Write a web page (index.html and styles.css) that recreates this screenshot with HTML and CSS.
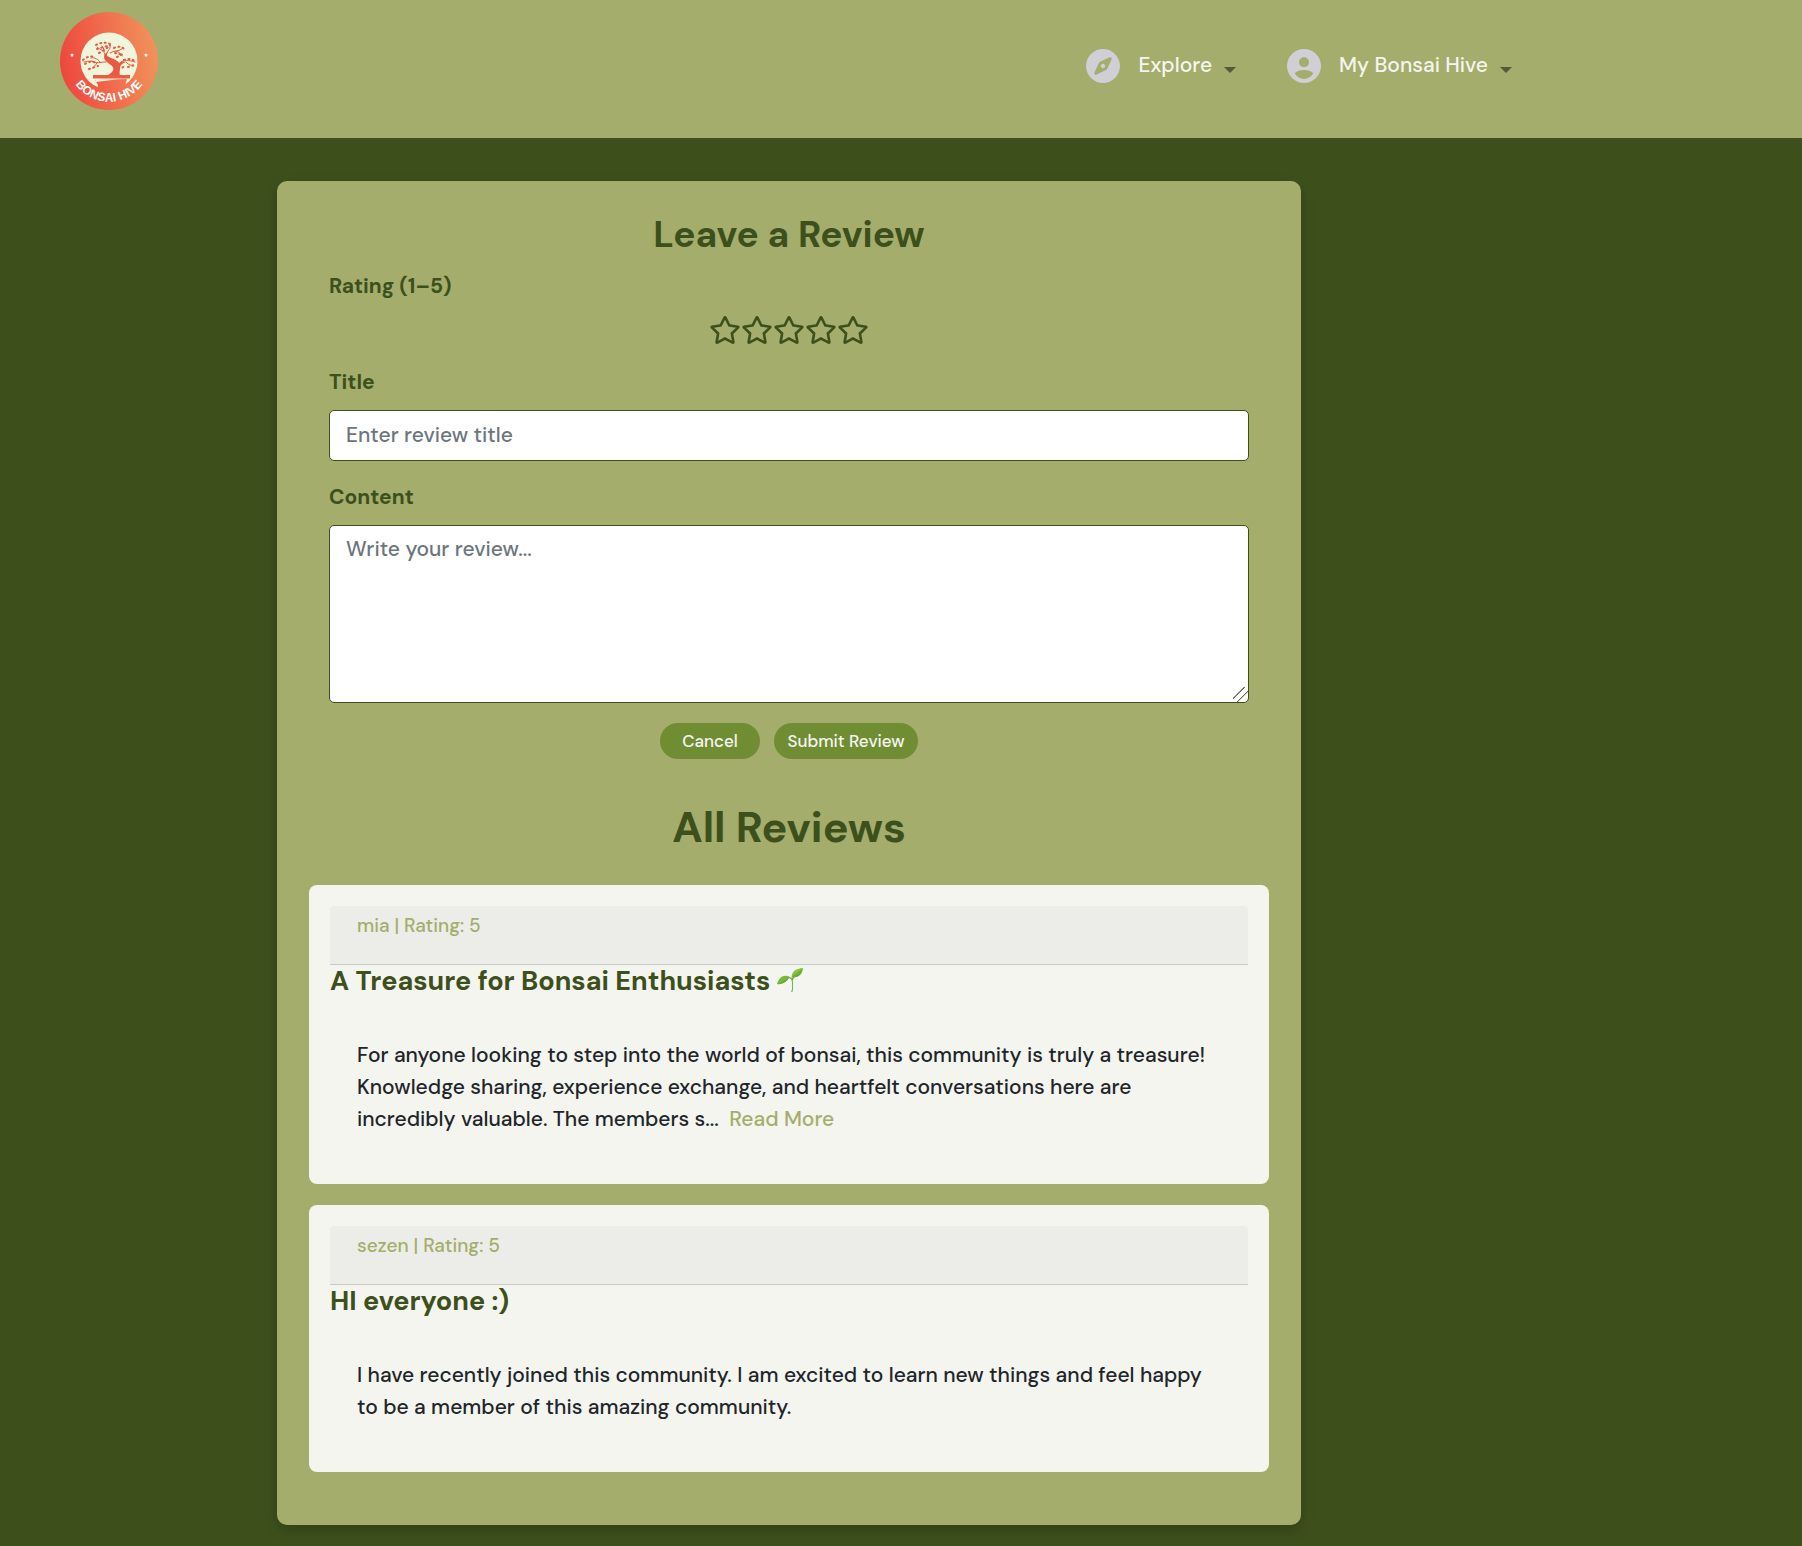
FILE: index.html
```html
<!DOCTYPE html>
<html lang="en">
<head>
<meta charset="utf-8">
<meta name="viewport" content="width=device-width, initial-scale=1">
<title>Bonsai Hive</title>
<link rel="stylesheet" href="styles.css">
</head>
<body>
<svg class="sprite" aria-hidden="true">
  <symbol id="star" viewBox="0 0 576 512"><path d="M528.1 171.5L382 150.2 316.7 17.8c-11.7-23.6-45.6-23.9-57.4 0L194 150.2 47.9 171.5c-26.2 3.8-36.7 36.1-17.7 54.6l105.7 103-25 145.5c-4.5 26.3 23.2 46 46.4 33.7L288 439.6l130.7 68.7c23.2 12.2 50.9-7.4 46.4-33.7l-25-145.5 105.7-103c19-18.5 8.5-50.8-17.7-54.6zM388.6 312.3l23.7 138.4L288 385.4l-124.3 65.3 23.7-138.4-100.6-98 139-20.2 62.2-126 62.2 126 139 20.2-100.6 98z"/></symbol>
</svg>

<header class="site-header">
  <a class="logo" href="#" aria-label="Bonsai Hive home">
    <svg viewBox="0 0 98 98" width="98" height="98">
      <defs>
        <linearGradient id="coral" gradientUnits="userSpaceOnUse" x1="0" y1="58" x2="98" y2="40">
          <stop offset="0" stop-color="#ee463d"/>
          <stop offset="1" stop-color="#f0935b"/>
        </linearGradient>
        <path id="arc" d="M14 70 A41 41 0 0 0 84 70"/>
      </defs>
      <circle cx="49" cy="49" r="49" fill="url(#coral)"/>
      <circle cx="49" cy="49" r="28.5" fill="#f0f5dc"/>
      <circle cx="12" cy="43" r="1.5" fill="#fff"/>
      <circle cx="86" cy="43" r="1.5" fill="#fff"/>
      <path fill="#ea5c43" d="M33 63h37v3.500H33z"/>
      <path fill="url(#coral)" d="M35 68l32-1-2 7 1 5H37l1-6z"/>
      <path fill="#f0f5dc" d="M35 67.500h21l-20 2.500z"/>
      <path fill="#e8593f" d="M48 63c5-3 7-6 4-9-3-3-8-5-8-9 0-3 2-4 4-5-2 4-1 4 3 6 4 1 7 3 8 5 2-1 4-2 7-1-3 1-6 3-6 6 0 3-1 5 0 7z"/>
      <path fill="none" stroke="#e8593f" stroke-width="1" stroke-linecap="round" d="M46 50c-6 0-10 2-14-1M40 50c-3-4-7-5-9-4M34 50c-3-2-7 0-10 0M37 51c-2 3-3 3-4 5M45 43c-2-4 0-6-3-9M47 41c1-3 4-4 3-8M44 39c-3-1-5-2-7-4M50 41c4-3 8-1 12-4M56 39c3 1 5 3 6 5M60 51c3-4 9-3 15-1M66 50c3 3 5 4 7 3"/>
      <path fill="none" stroke="#e8593f" stroke-width="2" stroke-linecap="round" stroke-dasharray="1 3.500" d="M23 48q6-5 11-3M25 52q6-4 11-1M29 57l9-3M36 33q7-4 14-1M37 37l10-3M39 41q8-4 11-8M54 36q6-3 10 1M55 41l8 2M57 45l6-3M64 48q6-3 12 2M58 57q5-1 8-4M68 55l7-2"/>
      <text class="logo-text"><textPath href="#arc" startOffset="50%" text-anchor="middle">BONSAI HIVE</textPath></text>
    </svg>
  </a>
  <nav class="nav" aria-label="Main">
    <button class="nav-item" type="button">
      <svg class="nav-icon" viewBox="0 8 496 496" aria-hidden="true"><path d="M225.380 233.370c-12.500 12.500-12.500 32.760 0 45.250 12.490 12.500 32.760 12.500 45.250 0 12.500-12.500 12.500-32.760 0-45.250-12.500-12.490-32.760-12.490-45.250 0zM248 8C111.030 8 0 119.030 0 256s111.030 248 248 248 248-111.030 248-248S384.970 8 248 8zm126.140 148.050L308.170 300.400a31.938 31.938 0 0 1-15.770 15.770l-144.340 65.970c-16.650 7.610-33.810-9.550-26.200-26.200l65.980-144.350a31.938 31.938 0 0 1 15.770-15.770l144.340-65.970c16.650-7.600 33.800 9.550 26.190 26.200z"/></svg>
      <span>Explore</span>
      <span class="caret"></span>
    </button>
    <button class="nav-item" type="button">
      <svg class="nav-icon" viewBox="0 0 102 102" aria-hidden="true"><path fill-rule="evenodd" d="M51 0a51 51 0 1 0 0 102A51 51 0 1 0 51 0zM51 25a15 15 0 1 1 0 30 15 15 0 1 1 0-30zM23 73Q34 63 51 63T79 73Q68 90 51 90T23 73z"/></svg>
      <span>My Bonsai Hive</span>
      <span class="caret"></span>
    </button>
  </nav>
</header>

<main class="page">
  <div class="panel">
    <form class="review-form">
      <h2 class="form-title">Leave a Review</h2>
      <p class="label" id="rating-label">Rating (1–5)</p>
      <div class="stars" role="radiogroup" aria-labelledby="rating-label">
        <label class="star"><input type="radio" name="rating" value="1" aria-label="1 star"><svg><use href="#star"/></svg></label>
        <label class="star"><input type="radio" name="rating" value="2" aria-label="2 stars"><svg><use href="#star"/></svg></label>
        <label class="star"><input type="radio" name="rating" value="3" aria-label="3 stars"><svg><use href="#star"/></svg></label>
        <label class="star"><input type="radio" name="rating" value="4" aria-label="4 stars"><svg><use href="#star"/></svg></label>
        <label class="star"><input type="radio" name="rating" value="5" aria-label="5 stars"><svg><use href="#star"/></svg></label>
      </div>
      <label class="label" for="title">Title</label>
      <input class="field" id="title" type="text" placeholder="Enter review title">
      <label class="label" for="content">Content</label>
      <textarea class="field field-area" id="content" placeholder="Write your review..."></textarea>
      <div class="actions">
        <button class="btn btn-cancel" type="button">Cancel</button>
        <button class="btn btn-submit" type="submit">Submit Review</button>
      </div>
    </form>

    <section>
      <h1 class="list-title">All Reviews</h1>
      <div class="reviews">
        <article class="card">
          <div class="card-meta">mia | Rating: 5</div>
          <h3 class="card-title">A Treasure for Bonsai Enthusiasts
            <svg class="sprout" viewBox="0 0 78 76" role="img" aria-label="seedling">
              <path fill="#5f9e35" d="M43 73c4-12 4-27 0-39-4-4-8-3-12-2l2-3c5-1 9-1 12 3 3-5 5-7 8-9l2 2c-4 4-7 9-8 14 2 11 2 24-1 35z"/>
              <path fill="#7cb93c" d="M0 49C4 30 18 19 37 26 31 41 18 50 0 49z"/>
              <path fill="#6aa836" d="M0 49C14 44 26 36 37 26 31 41 18 50 0 49z"/>
              <path fill="#84c341" d="M78 0C76 20 64 31 44 27 44 10 58 2 78 0z"/>
              <path fill="#6dab38" d="M78 0C76 20 64 31 44 27 56 20 68 12 78 0z"/>
            </svg>
          </h3>
          <p class="card-body">For anyone looking to step into the world of bonsai, this community is truly a treasure! Knowledge sharing, experience exchange, and heartfelt conversations here are incredibly valuable. The members s... <a class="more" href="#">Read More</a></p>
        </article>
        <article class="card">
          <div class="card-meta">sezen | Rating: 5</div>
          <h3 class="card-title">HI everyone :)</h3>
          <p class="card-body">I have recently joined this community. I am excited to learn new things and feel happy to be a member of this amazing community.</p>
        </article>
      </div>
    </section>
  </div>
</main>
</body>
</html>
```
FILE: styles.css
```css
:root {
  --forest: #3d501c;
  --sage: #a4ad6b;
  --leaf: #708d34;
  --paper: #f5f5f0;
}

* {
  box-sizing: border-box;
  margin: 0;
}

body {
  background: var(--forest);
  color: #212529;
  font-family: "DM Sans", Inter, "Open Sans", sans-serif;
  font-size: 21px;
  font-weight: 500;
  line-height: 32px;
}

button,
input,
textarea {
  font: inherit;
}

.sprite {
  display: none;
}

.site-header {
  display: flex;
  justify-content: space-between;
  align-items: flex-start;
  height: 138px;
  padding: 12px 290px 0 60px;
  background: var(--sage);
}

.logo {
  display: block;
  height: 98px;
}

.logo-text {
  fill: #fff;
  font-family: "Liberation Sans", sans-serif;
  font-size: 12px;
  font-weight: bold;
}

.nav {
  display: flex;
  gap: 51px;
  padding-top: 37px;
}

.nav-item {
  display: flex;
  align-items: flex-start;
  padding: 0;
  border: 0;
  background: none;
  color: var(--paper);
  white-space: nowrap;
}

.nav-icon {
  width: 34px;
  height: 34px;
  margin-right: 18px;
  fill: #d0cfd6;
}

.caret {
  margin: 18px 0 0 12px;
  border: 6px solid transparent;
  border-top-color: #555a36;
  border-bottom: 0;
}

.page {
  padding: 43px 224px 20px 0;
}

.panel {
  max-width: 1024px;
  margin: 0 auto;
  padding: 32px 32px 53px;
  border-radius: 10px;
  background: var(--sage);
  box-shadow: 0 5px 13px rgba(0, 0, 0, 0.2);
}

.review-form {
  padding: 0 20px;
}

.form-title,
.list-title,
.card-title,
.label {
  color: var(--forest);
}

.form-title {
  margin-bottom: 15px;
  font-size: 37px;
  line-height: 42px;
  text-align: center;
}

.label {
  display: block;
  margin-bottom: 12px;
  font-weight: 700;
}

.stars {
  display: flex;
  justify-content: center;
  margin-bottom: 20px;
}

.star {
  position: relative;
  height: 32px;
  cursor: pointer;
}

.star input {
  position: absolute;
  inset: 0;
  opacity: 0;
}

.star svg {
  display: block;
  width: 32px;
  height: 28px;
  margin-top: 2px;
  fill: var(--forest);
}

.field {
  display: block;
  width: 100%;
  height: 51px;
  margin-bottom: 20px;
  padding: 7px 16px 9px;
  border: 1px solid var(--forest);
  border-radius: 5px;
  background: #fff;
  color: #212529;
}

.field::placeholder {
  color: #6c757d;
  opacity: 1;
}

.field-area {
  height: 178px;
  resize: vertical;
}

.field-area::-webkit-resizer {
  background: linear-gradient(135deg, transparent 36%, #666 37% 42%, transparent 43% 60%, #666 61% 66%, transparent 67%);
}

.actions {
  display: flex;
  justify-content: center;
  gap: 14px;
}

.btn {
  height: 36px;
  padding: 0 0 1px;
  border: 0;
  border-radius: 18px;
  background: var(--leaf);
  color: var(--paper);
  font-size: 17px;
}

.btn-cancel {
  width: 100px;
}

.btn-submit {
  width: 144px;
}

.list-title {
  padding: 42px 0 32px;
  font-size: 43px;
  line-height: 52px;
  text-align: center;
}

.reviews {
  display: grid;
  gap: 21px;
}

.card {
  padding: 21px;
  border-radius: 8px;
  background: var(--paper);
}

.card-meta {
  height: 59px;
  padding: 4px 27px;
  border-bottom: 1px solid #c9cbc6;
  border-radius: 4px 4px 0 0;
  background: #ecede8;
  color: var(--sage);
  font-size: 19px;
}

.card-title {
  margin-bottom: 14px;
  font-size: 27px;
}

.sprout {
  width: 26px;
  height: 25px;
  vertical-align: -3px;
}

.card-body {
  padding: 28px 27px;
}

.more {
  margin-left: 5px;
  color: var(--sage);
  text-decoration: none;
}
```
